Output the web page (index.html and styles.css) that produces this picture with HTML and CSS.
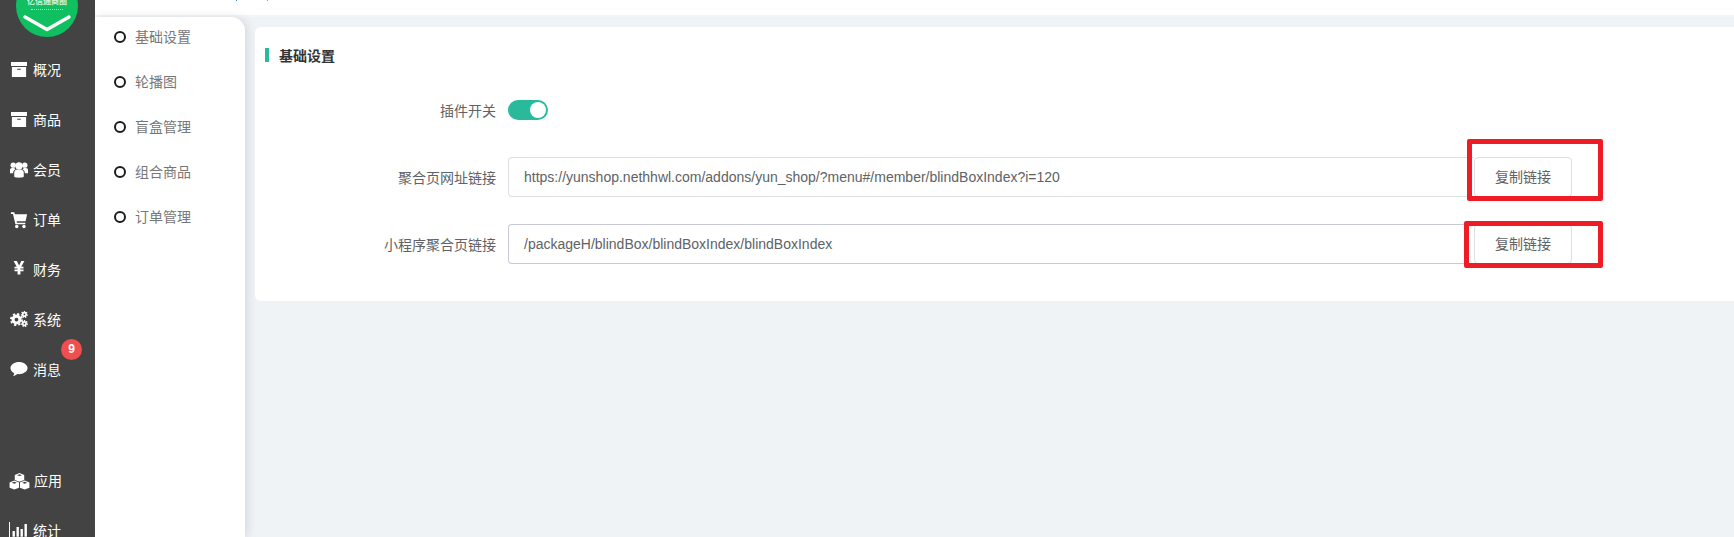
FILE: index.html
```html
<!DOCTYPE html>
<html lang="zh-CN">
<head>
<meta charset="utf-8">
<title>基础设置</title>
<link rel="stylesheet" href="styles.css">
</head>
<body>
<div class="app">
  <aside class="sidebar">
    <div class="logo">
      <div class="logo-name">亿信通商圈</div>
      <div class="logo-tag"></div>
      <svg class="logo-mark" viewBox="0 0 48 18"><path d="M2 3 L24 15.500 L46 3" fill="none" stroke="#fff" stroke-width="3.400" stroke-linecap="round" stroke-linejoin="round"/></svg>
    </div>
    <nav class="menu">
      <a class="menu-item"><svg class="ico ico-box" viewBox="1 0 18 18"><path fill="#fff" d="M1 0h18v4.500H1zM2 5.500h16V17H2zM8 7.500v1.300h4V7.500z" fill-rule="evenodd"/></svg><span>概况</span></a>
      <a class="menu-item"><svg class="ico ico-box" viewBox="1 0 18 18"><path fill="#fff" d="M1 0h18v4.500H1zM2 5.500h16V17H2zM8 7.500v1.300h4V7.500z" fill-rule="evenodd"/></svg><span>商品</span></a>
      <a class="menu-item"><svg class="ico" viewBox="0 0 20 20"><g fill="#fff"><circle cx="10" cy="5.500" r="4"/><circle cx="3.600" cy="4.600" r="3"/><circle cx="16.400" cy="4.600" r="3"/><path d="M4.700 17.500v-4.500c0-2 1.500-3.500 3.300-3.500h4c1.800 0 3.300 1.500 3.300 3.500v4.500c-2 1.300-8.600 1.300-10.600 0z"/><path d="M0 13.500v-3.500C0 8.500 1 7.700 2.300 7.700h2.500c.3.800.8 1.400 1.400 1.800-1.700.6-2.700 2-2.700 4zM20 13.500v-3.500c0-1.500-1-2.300-2.300-2.300h-2.500c-.3.800-.8 1.400-1.400 1.800 1.700.6 2.700 2 2.700 4z"/></g></svg><span>会员</span></a>
      <a class="menu-item"><svg class="ico" viewBox="0 0 20 20"><g fill="#fff"><path d="M1 1.500h3.800l.6 2H19l-1.700 8H7.400l.3 1.500H17v1.700H6L3.300 3.300H1z"/><circle cx="7.500" cy="17.300" r="1.900"/><circle cx="15.500" cy="17.300" r="1.900"/></g></svg><span>订单</span></a>
      <a class="menu-item"><svg class="ico" viewBox="0 0 20 20"><path fill="#fff" d="M4 0h3.600l2.500 5L12.600 0H16l-3.500 6.500H15v1.800h-3.400v1.200H15v1.800h-3.400V15H8.400v-3.700H5V9.500h3.400V8.300H5V6.500h2.500z"/></svg><span>财务</span></a>
      <a class="menu-item"><svg class="ico" viewBox="0 0 20 20"><g fill="none" stroke="#fff"><circle cx="7.200" cy="9.500" r="3.800" stroke-width="3.400"/><circle cx="7.200" cy="9.500" r="6.200" stroke-width="2" stroke-dasharray="2.500 2.370"/><circle cx="16" cy="3.800" r="1.900" stroke-width="1.900"/><circle cx="16" cy="14" r="1.900" stroke-width="1.900"/><circle cx="16" cy="3.800" r="3.300" stroke-width="1.300" stroke-dasharray="1.500 1.400"/><circle cx="16" cy="14" r="3.300" stroke-width="1.300" stroke-dasharray="1.500 1.400"/></g></svg><span>系统</span></a>
      <a class="menu-item"><svg class="ico" viewBox="0 0 20 20"><path fill="#fff" d="M10 1c5 0 9.500 2.900 9.500 6.800S15 14.600 10 14.600c-.7 0-1.400 0-2-.1-1.200 1.300-2.700 1.900-4.600 2.300.7-1 1.200-2.100 1.300-3.300C2.200 12.300.5 10.300.5 7.800.5 3.900 5 1 10 1z"/></svg><span>消息</span><b class="badge">9</b></a>
      <a class="menu-item menu-item-apps"><svg class="ico ico-apps" viewBox="0 0 22 18"><g fill="#fff"><path d="M11 0l5 2v5.300l-5 2-5-2V2z"/><path d="M5.500 8l5 2v5.500l-5 2-5-2V10z"/><path d="M16.500 8l5 2v5.500l-5 2-5-2V10z"/></g><g fill="#434343"><path d="M11 3.300l2.600-1L11 1.300l-2.600 1z"/><path d="M5.500 11.300l2.600-1-2.600-1-2.600 1z"/><path d="M16.500 11.300l2.600-1-2.600-1-2.600 1z"/></g></svg><span>应用</span></a>
      <a class="menu-item"><svg class="ico ico-chart" viewBox="0 0 20 17"><path fill="#fff" d="M0 0h1v15.800h19V17H0zM3.500 9h2.400v5.800H3.500zM7.500 5h2.400v9.800H7.500zM11.500 7h2.400v7.800h-2.400zM15.500 2h2.400v12.800h-2.400z"/></svg><span>统计</span></a>
    </nav>
  </aside>
  <div class="main">
    <header class="topbar"><i class="speck speck-blue"></i><i class="speck speck-orange"></i></header>
    <div class="workspace">
      <nav class="subnav">
        <a class="subnav-item"><i class="dot"></i>基础设置</a>
        <a class="subnav-item"><i class="dot"></i>轮播图</a>
        <a class="subnav-item"><i class="dot"></i>盲盒管理</a>
        <a class="subnav-item"><i class="dot"></i>组合商品</a>
        <a class="subnav-item"><i class="dot"></i>订单管理</a>
      </nav>
      <section class="card">
        <h2 class="card-title">基础设置</h2>
        <div class="form">
          <div class="row">
            <label class="label">插件开关</label>
            <span class="switch"><i class="switch-knob"></i></span>
          </div>
          <div class="row">
            <label class="label">聚合页网址链接</label>
            <div class="field">https://yunshop.nethhwl.com/addons/yun_shop/?menu#/member/blindBoxIndex?i=120</div>
            <button class="copy" type="button">复制链接</button>
          </div>
          <div class="row">
            <label class="label">小程序聚合页链接</label>
            <div class="field field-hover">/packageH/blindBox/blindBoxIndex/blindBoxIndex</div>
            <button class="copy" type="button">复制链接</button>
          </div>
        </div>
        <i class="mark mark-one"></i>
        <i class="mark mark-two"></i>
      </section>
    </div>
  </div>
</div>
</body>
</html>
```
FILE: styles.css
```css
* { box-sizing: border-box; }
html, body { margin: 0; height: 100%; overflow: hidden; }
body {
  font-family: "Liberation Sans", "Noto Sans CJK SC", sans-serif;
  font-size: 14px;
  background: #eff3f6;
}
.app { display: flex; width: 1734px; height: 537px; overflow: hidden; }

.sidebar { width: 95px; flex: none; background: #434343; position: relative; overflow: hidden; }
.logo {
  width: 62px; height: 62px; margin: -25px 0 0 16px;
  border-radius: 50%; background: #0fbf60;
  display: flex; flex-direction: column; align-items: center; justify-content: flex-end;
  padding-bottom: 5px;
}
.logo-name { font-size: 8px; line-height: 8px; font-weight: 700; color: #d5f5e2; white-space: nowrap; }
.logo-tag { width: 32px; height: 1px; margin: 3px 0 4px; border-top: 1px dotted #a5e6c2; }
.logo-mark { width: 48px; height: 18px; display: block; flex: none; overflow: visible; }
.menu { display: flex; flex-direction: column; margin-top: 8px; }
.menu-item { height: 50px; display: flex; align-items: center; padding-left: 10px; color: #fff; position: relative; }
.menu-item span { margin-left: 5px; font-size: 14px; line-height: 20px; }
.menu-item-apps { margin-top: 61px; padding-left: 8px; }
.ico { width: 18px; height: 18px; flex: none; }
.ico-box { width: 16px; height: 16px; margin: -1px 1px 0; }
.ico-apps { width: 21px; height: 17px; margin-right: -1px; margin-left: 1px; }
.ico-chart { width: 20px; height: 17px; margin-left: -1px; margin-right: -1px; margin-top: -1px; }
.badge {
  position: absolute; left: 61px; top: -6px;
  width: 21px; height: 21px; border-radius: 50%;
  background: #f04f4f; color: #fff; font-size: 12px; line-height: 21px; text-align: center;
}

.main { flex: 1; min-width: 0; display: flex; flex-direction: column; }
.topbar { height: 15px; flex: none; background: #fff; display: flex; align-items: flex-start; gap: 30px; padding-left: 141px; }
.speck { width: 1px; height: 1px; display: block; }
.speck-blue { background: #3a8fd0; }
.speck-orange { background: #e08a2a; }
.workspace { flex: 1; display: flex; background: #eff3f6; border-top: 2px solid #f4f5f6; min-height: 0; }

.subnav {
  width: 150px; flex: none; background: #fff;
  border-radius: 0 14px 0 0;
  box-shadow: 3px 0 8px rgba(120, 130, 150, .2);
  display: flex; flex-direction: column; gap: 5px;
  position: relative;
}
.subnav-item { height: 40px; display: flex; align-items: center; padding: 0 0 2px 19px; color: #777; }
.dot { width: 12px; height: 12px; border: 2px solid #1c1c1c; border-radius: 50%; margin: 2px 9px 0 0; flex: none; }

.card {
  flex: 1; min-width: 0; height: 274px;
  margin: 10px 0 0 10px;
  background: #fff; border-radius: 6px 0 0 6px;
  padding: 21px 0 0 10px;
  position: relative;
}
.card-title {
  margin: 0; height: 14px; padding-left: 10px;
  border-left: 4px solid #29ba9c;
  font-size: 14px; line-height: 16px; font-weight: 700; color: #333;
}
.form { margin: 28px 0 0 -10px; display: flex; flex-direction: column; gap: 27px; }
.row { display: flex; align-items: center; height: 40px; }
.label { width: 241px; margin-right: 12px; text-align: right; color: #606266; font-size: 14px; flex: none; white-space: nowrap; }
.switch { width: 40px; height: 20px; border-radius: 10px; background: #29ba9c; display: flex; justify-content: flex-end; align-items: center; padding-right: 2px; }
.switch-knob { width: 16px; height: 16px; border-radius: 50%; background: #fff; display: block; }
.field {
  width: 966px; height: 40px; line-height: 38px; padding-left: 15px;
  border: 1px solid #dcdfe6; border-right: 0; border-radius: 4px 0 0 4px;
  color: #606266; font-size: 14px; white-space: nowrap;
}
.field-hover { border-color: #c8c9d4; }
.copy {
  width: 98px; height: 40px; padding: 0 0 2px;
  background: #fff; border: 1px solid #dcdfe6; border-radius: 4px;
  color: #606266; font: inherit; font-size: 14px;
}
.mark { position: absolute; border: 5px solid #ee1c25; border-radius: 2px; display: block; }
.mark-one { left: 1212px; top: 112px; width: 136px; height: 62px; }
.mark-two { left: 1209px; top: 194px; width: 139px; height: 47px; }
```
